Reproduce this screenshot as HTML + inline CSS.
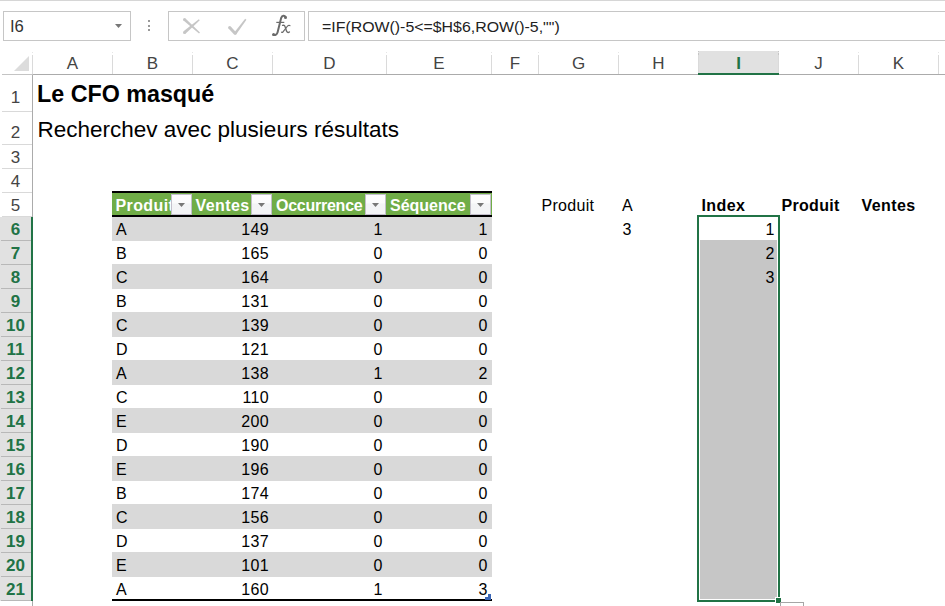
<!DOCTYPE html>
<html><head><meta charset="utf-8"><style>
html,body{margin:0;padding:0;background:#fff;width:945px;height:606px;overflow:hidden;position:relative;font-family:"Liberation Sans", sans-serif;}
</style></head><body>
<div style="position:absolute;left:0px;top:0px;width:945px;height:1px;background:#d6d6d6;"></div>
<div style="position:absolute;left:3px;top:11px;width:126px;height:28px;border:1px solid #c6c6c6;background:#fff"></div>
<div style="position:absolute;left:9.5px;top:17.52px;font-size:16px;line-height:normal;font-weight:normal;color:#333;white-space:nowrap;letter-spacing:0px;transform:scaleX(1.04);transform-origin:left top;">I6</div>
<svg style="position:absolute;left:0;top:0" width="945" height="80"><polygon points="115,24 122,24 118.5,28" fill="#777"/><rect x="148" y="20" width="2" height="2" fill="#999"/><rect x="148" y="25" width="2" height="2" fill="#999"/><rect x="148" y="29" width="2" height="2" fill="#999"/></svg>
<div style="position:absolute;left:168px;top:11px;width:135px;height:28px;border:1px solid #c6c6c6;background:#fff"></div>
<div style="position:absolute;left:308px;top:11px;width:700px;height:28px;border:1px solid #c6c6c6;background:#fff"></div>
<svg style="position:absolute;left:0;top:0" width="320" height="45"><polygon points="183.5,20.6 185.5,18.4 199.97,32.48 199.03,33.52" fill="#c6c6c6"/><circle cx="184.5" cy="19.5" r="1.5" fill="#c6c6c6"/><polygon points="198.84,19.27 199.76,20.33 185.48,33.64 183.52,31.36" fill="#c6c6c6"/><circle cx="184.5" cy="32.5" r="1.5" fill="#c6c6c6"/><polygon points="228.5,28.41 230.7,26.39 236.3,32.49 234.1,34.51" fill="#c6c6c6"/><circle cx="229.6" cy="27.4" r="1.5" fill="#c6c6c6"/><polygon points="236.32,34.34 234.08,32.66 245.16,18.82 246.44,19.78" fill="#c6c6c6"/><circle cx="235.2" cy="33.5" r="1.4" fill="#c6c6c6"/></svg>
<svg style="position:absolute;left:0;top:0" width="320" height="45"><path d="M285.6,17 C284.6,15.2 282.2,15.3 281.2,17.8 L277.6,32.2 C277,34.6 275.2,35.6 273.4,34.8" stroke="#6b6b6b" stroke-width="2" fill="none" stroke-linecap="round"/><circle cx="285.5" cy="17.6" r="1.5" fill="#6b6b6b"/><circle cx="273.6" cy="34.4" r="1.5" fill="#6b6b6b"/><path d="M276.3,22.4 H284.3" stroke="#6b6b6b" stroke-width="1.2" fill="none"/><path d="M282.6,25.4 C284.2,24.8 284.8,25.8 285.4,27.6 L286.4,30.8 C287,32.6 288.2,33 289.4,32" stroke="#6b6b6b" stroke-width="1.4" fill="none" stroke-linecap="round"/><path d="M290,25.6 C289,24.8 287.8,25.6 286,28 L283.4,31.4 C282.8,32.4 282.2,32.6 281.6,32.2" stroke="#6b6b6b" stroke-width="1.2" fill="none" stroke-linecap="round"/></svg>
<div style="position:absolute;left:321.5px;top:17.97px;font-size:15.5px;line-height:normal;font-weight:normal;color:#222;white-space:nowrap;letter-spacing:0px;transform:scaleX(1.025);transform-origin:left top;">=IF(ROW()-5&lt;=$H$6,ROW()-5,"")</div>
<div style="position:absolute;left:33px;top:74px;width:912px;height:1px;background:#ababab;"></div>
<div style="position:absolute;left:2px;top:74px;width:31px;height:1px;background:#c4c4c4;"></div>
<svg style="position:absolute;left:0;top:0" width="40" height="80"><polygon points="14,71 29,71 29,56" fill="#dcdcdc"/></svg>
<div style="position:absolute;left:32px;top:55px;width:1px;height:19px;background:#dadada;"></div>
<div style="position:absolute;left:32px;top:52px;width:1px;height:1px;background:#e6e6e6;"></div>
<div style="position:absolute;left:698px;top:51px;width:81px;height:23px;background:#e1e1e1;"></div>
<div style="position:absolute;left:698px;top:51px;width:1px;height:23px;background:#c6c6c6;"></div>
<div style="position:absolute;left:778px;top:51px;width:1px;height:23px;background:#c6c6c6;"></div>
<div style="position:absolute;left:112px;top:55px;width:1px;height:19px;background:#dadada;"></div>
<div style="position:absolute;left:112px;top:52px;width:1px;height:1px;background:#e6e6e6;"></div>
<div style="position:absolute;left:192px;top:55px;width:1px;height:19px;background:#dadada;"></div>
<div style="position:absolute;left:192px;top:52px;width:1px;height:1px;background:#e6e6e6;"></div>
<div style="position:absolute;left:272px;top:55px;width:1px;height:19px;background:#dadada;"></div>
<div style="position:absolute;left:272px;top:52px;width:1px;height:1px;background:#e6e6e6;"></div>
<div style="position:absolute;left:386px;top:55px;width:1px;height:19px;background:#dadada;"></div>
<div style="position:absolute;left:386px;top:52px;width:1px;height:1px;background:#e6e6e6;"></div>
<div style="position:absolute;left:491px;top:55px;width:1px;height:19px;background:#dadada;"></div>
<div style="position:absolute;left:491px;top:52px;width:1px;height:1px;background:#e6e6e6;"></div>
<div style="position:absolute;left:538px;top:55px;width:1px;height:19px;background:#dadada;"></div>
<div style="position:absolute;left:538px;top:52px;width:1px;height:1px;background:#e6e6e6;"></div>
<div style="position:absolute;left:618px;top:55px;width:1px;height:19px;background:#dadada;"></div>
<div style="position:absolute;left:618px;top:52px;width:1px;height:1px;background:#e6e6e6;"></div>
<div style="position:absolute;left:698px;top:55px;width:1px;height:19px;background:#dadada;"></div>
<div style="position:absolute;left:698px;top:52px;width:1px;height:1px;background:#e6e6e6;"></div>
<div style="position:absolute;left:778px;top:55px;width:1px;height:19px;background:#dadada;"></div>
<div style="position:absolute;left:778px;top:52px;width:1px;height:1px;background:#e6e6e6;"></div>
<div style="position:absolute;left:858px;top:55px;width:1px;height:19px;background:#dadada;"></div>
<div style="position:absolute;left:858px;top:52px;width:1px;height:1px;background:#e6e6e6;"></div>
<div style="position:absolute;left:938px;top:55px;width:1px;height:19px;background:#dadada;"></div>
<div style="position:absolute;left:938px;top:52px;width:1px;height:1px;background:#e6e6e6;"></div>
<div style="position:absolute;left:698px;top:73px;width:81px;height:2px;background:#217346;"></div>
<div style="position:absolute;left:-127.5px;width:400px;text-align:center;top:53.62px;font-size:17px;line-height:normal;font-weight:normal;color:#444;white-space:nowrap;letter-spacing:0px;">A</div>
<div style="position:absolute;left:-47.5px;width:400px;text-align:center;top:53.62px;font-size:17px;line-height:normal;font-weight:normal;color:#444;white-space:nowrap;letter-spacing:0px;">B</div>
<div style="position:absolute;left:32.5px;width:400px;text-align:center;top:53.62px;font-size:17px;line-height:normal;font-weight:normal;color:#444;white-space:nowrap;letter-spacing:0px;">C</div>
<div style="position:absolute;left:129.5px;width:400px;text-align:center;top:53.62px;font-size:17px;line-height:normal;font-weight:normal;color:#444;white-space:nowrap;letter-spacing:0px;">D</div>
<div style="position:absolute;left:239.0px;width:400px;text-align:center;top:53.62px;font-size:17px;line-height:normal;font-weight:normal;color:#444;white-space:nowrap;letter-spacing:0px;">E</div>
<div style="position:absolute;left:315.0px;width:400px;text-align:center;top:53.62px;font-size:17px;line-height:normal;font-weight:normal;color:#444;white-space:nowrap;letter-spacing:0px;">F</div>
<div style="position:absolute;left:378.5px;width:400px;text-align:center;top:53.62px;font-size:17px;line-height:normal;font-weight:normal;color:#444;white-space:nowrap;letter-spacing:0px;">G</div>
<div style="position:absolute;left:458.5px;width:400px;text-align:center;top:53.62px;font-size:17px;line-height:normal;font-weight:normal;color:#444;white-space:nowrap;letter-spacing:0px;">H</div>
<div style="position:absolute;left:538.5px;width:400px;text-align:center;top:53.62px;font-size:17px;line-height:normal;font-weight:bold;color:#217346;white-space:nowrap;letter-spacing:0px;">I</div>
<div style="position:absolute;left:618.5px;width:400px;text-align:center;top:53.62px;font-size:17px;line-height:normal;font-weight:normal;color:#444;white-space:nowrap;letter-spacing:0px;">J</div>
<div style="position:absolute;left:698.5px;width:400px;text-align:center;top:53.62px;font-size:17px;line-height:normal;font-weight:normal;color:#444;white-space:nowrap;letter-spacing:0px;">K</div>
<div style="position:absolute;left:32px;top:75px;width:1px;height:531px;background:#ababab;"></div>
<div style="position:absolute;left:0px;top:217px;width:31px;height:384px;background:#e1e1e1;"></div>
<div style="position:absolute;left:31px;top:217px;width:2px;height:384px;background:#217346;"></div>
<div style="position:absolute;left:2px;top:111px;width:30px;height:1px;background:#d9d9d9;"></div>
<div style="position:absolute;left:2px;top:144px;width:30px;height:1px;background:#d9d9d9;"></div>
<div style="position:absolute;left:2px;top:168px;width:30px;height:1px;background:#d9d9d9;"></div>
<div style="position:absolute;left:2px;top:192px;width:30px;height:1px;background:#d9d9d9;"></div>
<div style="position:absolute;left:2px;top:216px;width:30px;height:1px;background:#d9d9d9;"></div>
<div style="position:absolute;left:1px;top:240px;width:30px;height:1px;background:#b8b8b8;"></div>
<div style="position:absolute;left:1px;top:264px;width:30px;height:1px;background:#b8b8b8;"></div>
<div style="position:absolute;left:1px;top:288px;width:30px;height:1px;background:#b8b8b8;"></div>
<div style="position:absolute;left:1px;top:312px;width:30px;height:1px;background:#b8b8b8;"></div>
<div style="position:absolute;left:1px;top:336px;width:30px;height:1px;background:#b8b8b8;"></div>
<div style="position:absolute;left:1px;top:360px;width:30px;height:1px;background:#b8b8b8;"></div>
<div style="position:absolute;left:1px;top:384px;width:30px;height:1px;background:#b8b8b8;"></div>
<div style="position:absolute;left:1px;top:408px;width:30px;height:1px;background:#b8b8b8;"></div>
<div style="position:absolute;left:1px;top:432px;width:30px;height:1px;background:#b8b8b8;"></div>
<div style="position:absolute;left:1px;top:456px;width:30px;height:1px;background:#b8b8b8;"></div>
<div style="position:absolute;left:1px;top:480px;width:30px;height:1px;background:#b8b8b8;"></div>
<div style="position:absolute;left:1px;top:504px;width:30px;height:1px;background:#b8b8b8;"></div>
<div style="position:absolute;left:1px;top:528px;width:30px;height:1px;background:#b8b8b8;"></div>
<div style="position:absolute;left:1px;top:552px;width:30px;height:1px;background:#b8b8b8;"></div>
<div style="position:absolute;left:1px;top:576px;width:30px;height:1px;background:#b8b8b8;"></div>
<div style="position:absolute;left:1px;top:600px;width:30px;height:1px;background:#b8b8b8;"></div>
<div style="position:absolute;left:-184.5px;width:400px;text-align:center;top:87.61px;font-size:17px;line-height:normal;font-weight:normal;color:#444;white-space:nowrap;letter-spacing:0px;">1</div>
<div style="position:absolute;left:-184.5px;width:400px;text-align:center;top:123.11px;font-size:17px;line-height:normal;font-weight:normal;color:#444;white-space:nowrap;letter-spacing:0px;">2</div>
<div style="position:absolute;left:-184.5px;width:400px;text-align:center;top:148.12px;font-size:17px;line-height:normal;font-weight:normal;color:#444;white-space:nowrap;letter-spacing:0px;">3</div>
<div style="position:absolute;left:-184.5px;width:400px;text-align:center;top:172.12px;font-size:17px;line-height:normal;font-weight:normal;color:#444;white-space:nowrap;letter-spacing:0px;">4</div>
<div style="position:absolute;left:-184.5px;width:400px;text-align:center;top:196.12px;font-size:17px;line-height:normal;font-weight:normal;color:#444;white-space:nowrap;letter-spacing:0px;">5</div>
<div style="position:absolute;left:-184.5px;width:400px;text-align:center;top:220.12px;font-size:17px;line-height:normal;font-weight:bold;color:#217346;white-space:nowrap;letter-spacing:0px;">6</div>
<div style="position:absolute;left:-184.5px;width:400px;text-align:center;top:244.12px;font-size:17px;line-height:normal;font-weight:bold;color:#217346;white-space:nowrap;letter-spacing:0px;">7</div>
<div style="position:absolute;left:-184.5px;width:400px;text-align:center;top:268.12px;font-size:17px;line-height:normal;font-weight:bold;color:#217346;white-space:nowrap;letter-spacing:0px;">8</div>
<div style="position:absolute;left:-184.5px;width:400px;text-align:center;top:292.12px;font-size:17px;line-height:normal;font-weight:bold;color:#217346;white-space:nowrap;letter-spacing:0px;">9</div>
<div style="position:absolute;left:-184.5px;width:400px;text-align:center;top:316.12px;font-size:17px;line-height:normal;font-weight:bold;color:#217346;white-space:nowrap;letter-spacing:0px;">10</div>
<div style="position:absolute;left:-184.5px;width:400px;text-align:center;top:340.12px;font-size:17px;line-height:normal;font-weight:bold;color:#217346;white-space:nowrap;letter-spacing:0px;">11</div>
<div style="position:absolute;left:-184.5px;width:400px;text-align:center;top:364.12px;font-size:17px;line-height:normal;font-weight:bold;color:#217346;white-space:nowrap;letter-spacing:0px;">12</div>
<div style="position:absolute;left:-184.5px;width:400px;text-align:center;top:388.12px;font-size:17px;line-height:normal;font-weight:bold;color:#217346;white-space:nowrap;letter-spacing:0px;">13</div>
<div style="position:absolute;left:-184.5px;width:400px;text-align:center;top:412.12px;font-size:17px;line-height:normal;font-weight:bold;color:#217346;white-space:nowrap;letter-spacing:0px;">14</div>
<div style="position:absolute;left:-184.5px;width:400px;text-align:center;top:436.12px;font-size:17px;line-height:normal;font-weight:bold;color:#217346;white-space:nowrap;letter-spacing:0px;">15</div>
<div style="position:absolute;left:-184.5px;width:400px;text-align:center;top:460.12px;font-size:17px;line-height:normal;font-weight:bold;color:#217346;white-space:nowrap;letter-spacing:0px;">16</div>
<div style="position:absolute;left:-184.5px;width:400px;text-align:center;top:484.12px;font-size:17px;line-height:normal;font-weight:bold;color:#217346;white-space:nowrap;letter-spacing:0px;">17</div>
<div style="position:absolute;left:-184.5px;width:400px;text-align:center;top:508.12px;font-size:17px;line-height:normal;font-weight:bold;color:#217346;white-space:nowrap;letter-spacing:0px;">18</div>
<div style="position:absolute;left:-184.5px;width:400px;text-align:center;top:532.12px;font-size:17px;line-height:normal;font-weight:bold;color:#217346;white-space:nowrap;letter-spacing:0px;">19</div>
<div style="position:absolute;left:-184.5px;width:400px;text-align:center;top:556.12px;font-size:17px;line-height:normal;font-weight:bold;color:#217346;white-space:nowrap;letter-spacing:0px;">20</div>
<div style="position:absolute;left:-184.5px;width:400px;text-align:center;top:580.12px;font-size:17px;line-height:normal;font-weight:bold;color:#217346;white-space:nowrap;letter-spacing:0px;">21</div>
<div style="position:absolute;left:36.5px;top:80.28px;font-size:24px;line-height:normal;font-weight:bold;color:#000;white-space:nowrap;letter-spacing:0px;transform:scaleX(0.97);transform-origin:left top;">Le CFO masqu&eacute;</div>
<div style="position:absolute;left:37.5px;top:116.64px;font-size:22.5px;line-height:normal;font-weight:normal;color:#000;white-space:nowrap;letter-spacing:0px;">Recherchev avec plusieurs r&eacute;sultats</div>
<div style="position:absolute;left:112px;top:191px;width:380px;height:2px;background:#000;"></div>
<div style="position:absolute;left:112px;top:193px;width:380px;height:22px;background:#70ad47;"></div>
<div style="position:absolute;left:112px;top:215px;width:380px;height:2px;background:#000;"></div>
<div style="position:absolute;left:112px;top:217px;width:380px;height:24px;background:#d9d9d9;"></div>
<div style="position:absolute;left:112px;top:264px;width:380px;height:25px;background:#d9d9d9;"></div>
<div style="position:absolute;left:112px;top:312px;width:380px;height:25px;background:#d9d9d9;"></div>
<div style="position:absolute;left:112px;top:360px;width:380px;height:25px;background:#d9d9d9;"></div>
<div style="position:absolute;left:112px;top:408px;width:380px;height:25px;background:#d9d9d9;"></div>
<div style="position:absolute;left:112px;top:456px;width:380px;height:25px;background:#d9d9d9;"></div>
<div style="position:absolute;left:112px;top:504px;width:380px;height:25px;background:#d9d9d9;"></div>
<div style="position:absolute;left:112px;top:552px;width:380px;height:25px;background:#d9d9d9;"></div>
<div style="position:absolute;left:112px;top:599px;width:380px;height:2px;background:#000;"></div>
<div style="position:absolute;left:115.5px;top:196.52px;font-size:16px;line-height:normal;font-weight:bold;color:#fff;white-space:nowrap;letter-spacing:0.4px;">Produit</div>
<div style="position:absolute;left:171px;top:194px;width:19px;height:19px;border:1px solid #c3bfcb;background:linear-gradient(#fdfdfd 0,#fbfbfc 40%,#f3f4f6 48%)"></div>
<svg style="position:absolute;left:178px;top:203px" width="8" height="5"><polygon points="0,0 7,0 3.5,4" fill="#777"/></svg>
<div style="position:absolute;left:195.5px;top:196.52px;font-size:16px;line-height:normal;font-weight:bold;color:#fff;white-space:nowrap;letter-spacing:0.4px;">Ventes</div>
<div style="position:absolute;left:251px;top:194px;width:19px;height:19px;border:1px solid #c3bfcb;background:linear-gradient(#fdfdfd 0,#fbfbfc 40%,#f3f4f6 48%)"></div>
<svg style="position:absolute;left:258px;top:203px" width="8" height="5"><polygon points="0,0 7,0 3.5,4" fill="#777"/></svg>
<div style="position:absolute;left:276px;top:196.52px;font-size:16px;line-height:normal;font-weight:bold;color:#fff;white-space:nowrap;letter-spacing:-0.25px;">Occurrence</div>
<div style="position:absolute;left:365px;top:194px;width:19px;height:19px;border:1px solid #c3bfcb;background:linear-gradient(#fdfdfd 0,#fbfbfc 40%,#f3f4f6 48%)"></div>
<svg style="position:absolute;left:372px;top:203px" width="8" height="5"><polygon points="0,0 7,0 3.5,4" fill="#777"/></svg>
<div style="position:absolute;left:390px;top:196.52px;font-size:16px;line-height:normal;font-weight:bold;color:#fff;white-space:nowrap;letter-spacing:0px;">S&eacute;quence</div>
<div style="position:absolute;left:470px;top:194px;width:19px;height:19px;border:1px solid #c3bfcb;background:linear-gradient(#fdfdfd 0,#fbfbfc 40%,#f3f4f6 48%)"></div>
<svg style="position:absolute;left:477px;top:203px" width="8" height="5"><polygon points="0,0 7,0 3.5,4" fill="#777"/></svg>
<div style="position:absolute;left:116px;top:221.02px;font-size:16px;line-height:normal;font-weight:normal;color:#000;white-space:nowrap;letter-spacing:0.25px;">A</div>
<div style="position:absolute;right:676.2px;top:221.02px;font-size:16px;line-height:normal;font-weight:normal;color:#000;white-space:nowrap;letter-spacing:0.25px;">149</div>
<div style="position:absolute;right:562.5px;top:221.02px;font-size:16px;line-height:normal;font-weight:normal;color:#000;white-space:nowrap;letter-spacing:0px;">1</div>
<div style="position:absolute;right:457.5px;top:221.02px;font-size:16px;line-height:normal;font-weight:normal;color:#000;white-space:nowrap;letter-spacing:0px;">1</div>
<div style="position:absolute;left:116px;top:245.02px;font-size:16px;line-height:normal;font-weight:normal;color:#000;white-space:nowrap;letter-spacing:0.25px;">B</div>
<div style="position:absolute;right:676.2px;top:245.02px;font-size:16px;line-height:normal;font-weight:normal;color:#000;white-space:nowrap;letter-spacing:0.25px;">165</div>
<div style="position:absolute;right:562.5px;top:245.02px;font-size:16px;line-height:normal;font-weight:normal;color:#000;white-space:nowrap;letter-spacing:0px;">0</div>
<div style="position:absolute;right:457.5px;top:245.02px;font-size:16px;line-height:normal;font-weight:normal;color:#000;white-space:nowrap;letter-spacing:0px;">0</div>
<div style="position:absolute;left:116px;top:269.02px;font-size:16px;line-height:normal;font-weight:normal;color:#000;white-space:nowrap;letter-spacing:0.25px;">C</div>
<div style="position:absolute;right:676.2px;top:269.02px;font-size:16px;line-height:normal;font-weight:normal;color:#000;white-space:nowrap;letter-spacing:0.25px;">164</div>
<div style="position:absolute;right:562.5px;top:269.02px;font-size:16px;line-height:normal;font-weight:normal;color:#000;white-space:nowrap;letter-spacing:0px;">0</div>
<div style="position:absolute;right:457.5px;top:269.02px;font-size:16px;line-height:normal;font-weight:normal;color:#000;white-space:nowrap;letter-spacing:0px;">0</div>
<div style="position:absolute;left:116px;top:293.02px;font-size:16px;line-height:normal;font-weight:normal;color:#000;white-space:nowrap;letter-spacing:0.25px;">B</div>
<div style="position:absolute;right:676.2px;top:293.02px;font-size:16px;line-height:normal;font-weight:normal;color:#000;white-space:nowrap;letter-spacing:0.25px;">131</div>
<div style="position:absolute;right:562.5px;top:293.02px;font-size:16px;line-height:normal;font-weight:normal;color:#000;white-space:nowrap;letter-spacing:0px;">0</div>
<div style="position:absolute;right:457.5px;top:293.02px;font-size:16px;line-height:normal;font-weight:normal;color:#000;white-space:nowrap;letter-spacing:0px;">0</div>
<div style="position:absolute;left:116px;top:317.02px;font-size:16px;line-height:normal;font-weight:normal;color:#000;white-space:nowrap;letter-spacing:0.25px;">C</div>
<div style="position:absolute;right:676.2px;top:317.02px;font-size:16px;line-height:normal;font-weight:normal;color:#000;white-space:nowrap;letter-spacing:0.25px;">139</div>
<div style="position:absolute;right:562.5px;top:317.02px;font-size:16px;line-height:normal;font-weight:normal;color:#000;white-space:nowrap;letter-spacing:0px;">0</div>
<div style="position:absolute;right:457.5px;top:317.02px;font-size:16px;line-height:normal;font-weight:normal;color:#000;white-space:nowrap;letter-spacing:0px;">0</div>
<div style="position:absolute;left:116px;top:341.02px;font-size:16px;line-height:normal;font-weight:normal;color:#000;white-space:nowrap;letter-spacing:0.25px;">D</div>
<div style="position:absolute;right:676.2px;top:341.02px;font-size:16px;line-height:normal;font-weight:normal;color:#000;white-space:nowrap;letter-spacing:0.25px;">121</div>
<div style="position:absolute;right:562.5px;top:341.02px;font-size:16px;line-height:normal;font-weight:normal;color:#000;white-space:nowrap;letter-spacing:0px;">0</div>
<div style="position:absolute;right:457.5px;top:341.02px;font-size:16px;line-height:normal;font-weight:normal;color:#000;white-space:nowrap;letter-spacing:0px;">0</div>
<div style="position:absolute;left:116px;top:365.02px;font-size:16px;line-height:normal;font-weight:normal;color:#000;white-space:nowrap;letter-spacing:0.25px;">A</div>
<div style="position:absolute;right:676.2px;top:365.02px;font-size:16px;line-height:normal;font-weight:normal;color:#000;white-space:nowrap;letter-spacing:0.25px;">138</div>
<div style="position:absolute;right:562.5px;top:365.02px;font-size:16px;line-height:normal;font-weight:normal;color:#000;white-space:nowrap;letter-spacing:0px;">1</div>
<div style="position:absolute;right:457.5px;top:365.02px;font-size:16px;line-height:normal;font-weight:normal;color:#000;white-space:nowrap;letter-spacing:0px;">2</div>
<div style="position:absolute;left:116px;top:389.02px;font-size:16px;line-height:normal;font-weight:normal;color:#000;white-space:nowrap;letter-spacing:0.25px;">C</div>
<div style="position:absolute;right:676.2px;top:389.02px;font-size:16px;line-height:normal;font-weight:normal;color:#000;white-space:nowrap;letter-spacing:0.25px;">110</div>
<div style="position:absolute;right:562.5px;top:389.02px;font-size:16px;line-height:normal;font-weight:normal;color:#000;white-space:nowrap;letter-spacing:0px;">0</div>
<div style="position:absolute;right:457.5px;top:389.02px;font-size:16px;line-height:normal;font-weight:normal;color:#000;white-space:nowrap;letter-spacing:0px;">0</div>
<div style="position:absolute;left:116px;top:413.02px;font-size:16px;line-height:normal;font-weight:normal;color:#000;white-space:nowrap;letter-spacing:0.25px;">E</div>
<div style="position:absolute;right:676.2px;top:413.02px;font-size:16px;line-height:normal;font-weight:normal;color:#000;white-space:nowrap;letter-spacing:0.25px;">200</div>
<div style="position:absolute;right:562.5px;top:413.02px;font-size:16px;line-height:normal;font-weight:normal;color:#000;white-space:nowrap;letter-spacing:0px;">0</div>
<div style="position:absolute;right:457.5px;top:413.02px;font-size:16px;line-height:normal;font-weight:normal;color:#000;white-space:nowrap;letter-spacing:0px;">0</div>
<div style="position:absolute;left:116px;top:437.02px;font-size:16px;line-height:normal;font-weight:normal;color:#000;white-space:nowrap;letter-spacing:0.25px;">D</div>
<div style="position:absolute;right:676.2px;top:437.02px;font-size:16px;line-height:normal;font-weight:normal;color:#000;white-space:nowrap;letter-spacing:0.25px;">190</div>
<div style="position:absolute;right:562.5px;top:437.02px;font-size:16px;line-height:normal;font-weight:normal;color:#000;white-space:nowrap;letter-spacing:0px;">0</div>
<div style="position:absolute;right:457.5px;top:437.02px;font-size:16px;line-height:normal;font-weight:normal;color:#000;white-space:nowrap;letter-spacing:0px;">0</div>
<div style="position:absolute;left:116px;top:461.02px;font-size:16px;line-height:normal;font-weight:normal;color:#000;white-space:nowrap;letter-spacing:0.25px;">E</div>
<div style="position:absolute;right:676.2px;top:461.02px;font-size:16px;line-height:normal;font-weight:normal;color:#000;white-space:nowrap;letter-spacing:0.25px;">196</div>
<div style="position:absolute;right:562.5px;top:461.02px;font-size:16px;line-height:normal;font-weight:normal;color:#000;white-space:nowrap;letter-spacing:0px;">0</div>
<div style="position:absolute;right:457.5px;top:461.02px;font-size:16px;line-height:normal;font-weight:normal;color:#000;white-space:nowrap;letter-spacing:0px;">0</div>
<div style="position:absolute;left:116px;top:485.02px;font-size:16px;line-height:normal;font-weight:normal;color:#000;white-space:nowrap;letter-spacing:0.25px;">B</div>
<div style="position:absolute;right:676.2px;top:485.02px;font-size:16px;line-height:normal;font-weight:normal;color:#000;white-space:nowrap;letter-spacing:0.25px;">174</div>
<div style="position:absolute;right:562.5px;top:485.02px;font-size:16px;line-height:normal;font-weight:normal;color:#000;white-space:nowrap;letter-spacing:0px;">0</div>
<div style="position:absolute;right:457.5px;top:485.02px;font-size:16px;line-height:normal;font-weight:normal;color:#000;white-space:nowrap;letter-spacing:0px;">0</div>
<div style="position:absolute;left:116px;top:509.02px;font-size:16px;line-height:normal;font-weight:normal;color:#000;white-space:nowrap;letter-spacing:0.25px;">C</div>
<div style="position:absolute;right:676.2px;top:509.02px;font-size:16px;line-height:normal;font-weight:normal;color:#000;white-space:nowrap;letter-spacing:0.25px;">156</div>
<div style="position:absolute;right:562.5px;top:509.02px;font-size:16px;line-height:normal;font-weight:normal;color:#000;white-space:nowrap;letter-spacing:0px;">0</div>
<div style="position:absolute;right:457.5px;top:509.02px;font-size:16px;line-height:normal;font-weight:normal;color:#000;white-space:nowrap;letter-spacing:0px;">0</div>
<div style="position:absolute;left:116px;top:533.02px;font-size:16px;line-height:normal;font-weight:normal;color:#000;white-space:nowrap;letter-spacing:0.25px;">D</div>
<div style="position:absolute;right:676.2px;top:533.02px;font-size:16px;line-height:normal;font-weight:normal;color:#000;white-space:nowrap;letter-spacing:0.25px;">137</div>
<div style="position:absolute;right:562.5px;top:533.02px;font-size:16px;line-height:normal;font-weight:normal;color:#000;white-space:nowrap;letter-spacing:0px;">0</div>
<div style="position:absolute;right:457.5px;top:533.02px;font-size:16px;line-height:normal;font-weight:normal;color:#000;white-space:nowrap;letter-spacing:0px;">0</div>
<div style="position:absolute;left:116px;top:557.02px;font-size:16px;line-height:normal;font-weight:normal;color:#000;white-space:nowrap;letter-spacing:0.25px;">E</div>
<div style="position:absolute;right:676.2px;top:557.02px;font-size:16px;line-height:normal;font-weight:normal;color:#000;white-space:nowrap;letter-spacing:0.25px;">101</div>
<div style="position:absolute;right:562.5px;top:557.02px;font-size:16px;line-height:normal;font-weight:normal;color:#000;white-space:nowrap;letter-spacing:0px;">0</div>
<div style="position:absolute;right:457.5px;top:557.02px;font-size:16px;line-height:normal;font-weight:normal;color:#000;white-space:nowrap;letter-spacing:0px;">0</div>
<div style="position:absolute;left:116px;top:581.02px;font-size:16px;line-height:normal;font-weight:normal;color:#000;white-space:nowrap;letter-spacing:0.25px;">A</div>
<div style="position:absolute;right:676.2px;top:581.02px;font-size:16px;line-height:normal;font-weight:normal;color:#000;white-space:nowrap;letter-spacing:0.25px;">160</div>
<div style="position:absolute;right:562.5px;top:581.02px;font-size:16px;line-height:normal;font-weight:normal;color:#000;white-space:nowrap;letter-spacing:0px;">1</div>
<div style="position:absolute;right:457.5px;top:581.02px;font-size:16px;line-height:normal;font-weight:normal;color:#000;white-space:nowrap;letter-spacing:0px;">3</div>
<svg style="position:absolute;left:484px;top:593px" width="8" height="8"><path d="M4,1 H7 V7 H1 V4 H4 Z" fill="#3a66b5"/></svg>
<div style="position:absolute;left:541.5px;top:196.52px;font-size:16px;line-height:normal;font-weight:normal;color:#000;white-space:nowrap;letter-spacing:0.3px;">Produit</div>
<div style="position:absolute;left:622px;top:196.52px;font-size:16px;line-height:normal;font-weight:normal;color:#000;white-space:nowrap;letter-spacing:0px;">A</div>
<div style="position:absolute;left:622.5px;top:221.02px;font-size:16px;line-height:normal;font-weight:normal;color:#000;white-space:nowrap;letter-spacing:0px;">3</div>
<div style="position:absolute;left:701.5px;top:196.52px;font-size:16px;line-height:normal;font-weight:bold;color:#000;white-space:nowrap;letter-spacing:0.4px;">Index</div>
<div style="position:absolute;left:781.5px;top:196.52px;font-size:16px;line-height:normal;font-weight:bold;color:#000;white-space:nowrap;letter-spacing:0.3px;">Produit</div>
<div style="position:absolute;left:861.5px;top:196.52px;font-size:16px;line-height:normal;font-weight:bold;color:#000;white-space:nowrap;letter-spacing:0.4px;">Ventes</div>
<div style="position:absolute;left:700px;top:240px;width:77px;height:359px;background:#c6c6c6;"></div>
<div style="position:absolute;left:697px;top:215px;width:79px;height:383px;border:2px solid #217346"></div>
<div style="position:absolute;right:170.5px;top:221.02px;font-size:16px;line-height:normal;font-weight:normal;color:#000;white-space:nowrap;letter-spacing:0px;">1</div>
<div style="position:absolute;right:170.5px;top:245.02px;font-size:16px;line-height:normal;font-weight:normal;color:#000;white-space:nowrap;letter-spacing:0px;">2</div>
<div style="position:absolute;right:170.5px;top:269.02px;font-size:16px;line-height:normal;font-weight:normal;color:#000;white-space:nowrap;letter-spacing:0px;">3</div>
<div style="position:absolute;left:775px;top:597px;width:7px;height:7px;background:#fff;"></div>
<div style="position:absolute;left:776px;top:598px;width:5px;height:5px;background:#217346;"></div>
<div style="position:absolute;left:780px;top:602px;width:22px;height:10px;border:1px solid #a6a6a6;background:#fff"></div>
</body></html>
